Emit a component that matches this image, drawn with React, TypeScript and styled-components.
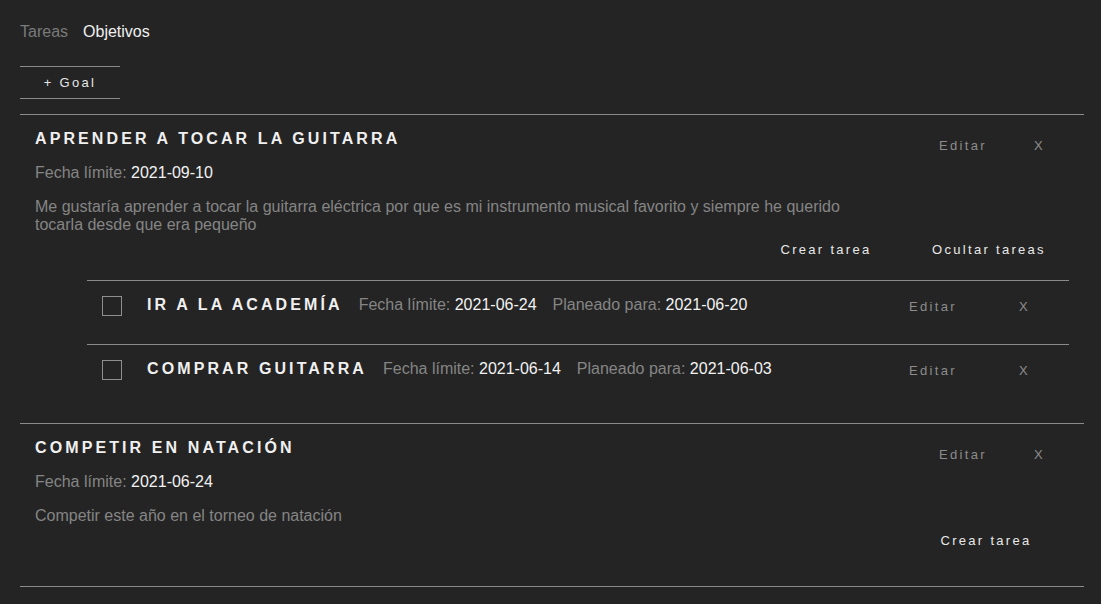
import React from "react";
import styled, { createGlobalStyle } from "styled-components";

const Global = createGlobalStyle`
  html, body { margin: 0; padding: 0; background: #242424; }
  body { font-family: "Liberation Sans", Arial, sans-serif; }
  * { box-sizing: border-box; }
`;

const Page = styled.div`
  min-height: 604px;
  background: #242424;
  padding: 23px 17px 0 20px;
  color: #eee;
`;

const Tabs = styled.nav`
  display: flex;
  gap: 15px;
  height: 18px;
`;

const Tab = styled.span<{ $active?: boolean }>`
  font-size: 16px;
  line-height: 18px;
  color: ${(p) => (p.$active ? "#f0f0f0" : "#7a7a7a")};
`;

const AddGoal = styled.button`
  display: block;
  margin-top: 25px;
  width: 100px;
  height: 33px;
  background: none;
  border: none;
  border-top: 1px solid #8a8a8a;
  border-bottom: 1px solid #8a8a8a;
  color: #e6e6e6;
  font-family: inherit;
  font-size: 13px;
  letter-spacing: 2.3px;
  padding: 0;
  text-align: center;
`;

const GoalList = styled.div`
  margin-top: 15px;
  border-bottom: 1px solid #8a8a8a;
`;

const GoalCard = styled.section`
  border-top: 1px solid #8a8a8a;
  padding: 14px 15px 15px 15px;
`;

const GoalHeader = styled.div`
  display: flex;
  align-items: flex-start;
  justify-content: space-between;
`;

const GoalTitle = styled.h2`
  margin: 0;
  font-size: 16px;
  line-height: 20px;
  font-weight: bold;
  letter-spacing: 3.1px;
  color: #f0f0f0;
`;

const Controls = styled.div<{ $gap?: number }>`
  display: flex;
  gap: ${(p) => p.$gap ?? 0}px;
  margin-top: 7px;
  margin-bottom: -7px;
  margin-right: -1px;
`;

const GhostButton = styled.button<{ $w: number }>`
  width: ${(p) => p.$w}px;
  height: 20px;
  padding: 0;
  background: none;
  border: none;
  color: #8c8c8c;
  font-family: inherit;
  font-size: 13px;
  line-height: 20px;
  letter-spacing: 2.3px;
  text-align: center;
`;

const Meta = styled.p`
  margin: 15px 0 0 0;
  font-size: 16px;
  line-height: 18px;
`;

const Label = styled.span`
  color: #858585;
`;

const Value = styled.span`
  color: #f2f2f2;
`;

const Description = styled.p`
  margin: 16px 0 0 0;
  max-width: 80%;
  font-size: 16px;
  line-height: 18px;
  color: #858585;
`;

const Actions = styled.div`
  display: flex;
  justify-content: flex-end;
  margin: 1px 0 15px 0;
`;

const ActionButton = styled.button<{ $w: number }>`
  width: ${(p) => p.$w}px;
  height: 30px;
  padding: 0;
  background: none;
  border: none;
  color: #e8e8e8;
  font-family: inherit;
  font-size: 13px;
  line-height: 30px;
  letter-spacing: 2.3px;
  text-align: center;
`;

const TaskList = styled.div`
  margin-left: 52px;
`;

const TaskRow = styled.div`
  display: flex;
  align-items: flex-start;
  height: 64px;
  border-top: 1px solid #8a8a8a;
  padding: 15px 15px 0 15px;
`;

const Checkbox = styled.span`
  flex: none;
  width: 20px;
  height: 20px;
  border: 1px solid #8e8e8e;
`;

const TaskTitle = styled.span`
  margin-left: 25px;
  font-size: 16px;
  line-height: 18px;
  font-weight: bold;
  letter-spacing: 3.1px;
  color: #f0f0f0;
`;

const TaskMeta = styled.span`
  margin-left: 16px;
  font-size: 16px;
  line-height: 18px;
  white-space: nowrap;
`;

const Spacer = styled.div`
  flex: 1;
`;

const TaskControls = styled.div`
  display: flex;
  gap: 15px;
  margin-top: 1px;
  margin-right: -1px;
`;

type Task = { title: string; deadline: string; planned: string };
type Goal = {
  title: string;
  deadline: string;
  description: string;
  tasks: Task[];
};

const goals: Goal[] = [
  {
    title: "APRENDER A TOCAR LA GUITARRA",
    deadline: "2021-09-10",
    description:
      "Me gustaría aprender a tocar la guitarra eléctrica por que es mi instrumento musical favorito y siempre he querido tocarla desde que era pequeño",
    tasks: [
      { title: "IR A LA ACADEMÍA", deadline: "2021-06-24", planned: "2021-06-20" },
      { title: "COMPRAR GUITARRA", deadline: "2021-06-14", planned: "2021-06-03" },
    ],
  },
  {
    title: "COMPETIR EN NATACIÓN",
    deadline: "2021-06-24",
    description: "Competir este año en el torneo de natación",
    tasks: [],
  },
];

export default function App() {
  return (
    <>
      <Global />
      <Page>
        <Tabs>
          <Tab>Tareas</Tab>
          <Tab $active>Objetivos</Tab>
        </Tabs>
        <AddGoal>+ Goal</AddGoal>
        <GoalList>
          {goals.map((g) => (
            <GoalCard key={g.title}>
              <GoalHeader>
                <GoalTitle>{g.title}</GoalTitle>
                <Controls>
                  <GhostButton $w={92}>Editar</GhostButton>
                  <GhostButton $w={61}>X</GhostButton>
                </Controls>
              </GoalHeader>
              <Meta>
                <Label>Fecha límite: </Label>
                <Value>{g.deadline}</Value>
              </Meta>
              <Description>{g.description}</Description>
              <Actions>
                <ActionButton $w={166}>Crear tarea</ActionButton>
                {g.tasks.length > 0 && (
                  <ActionButton $w={160}>Ocultar tareas</ActionButton>
                )}
              </Actions>
              {g.tasks.length > 0 && (
                <TaskList>
                  {g.tasks.map((t) => (
                    <TaskRow key={t.title}>
                      <Checkbox />
                      <TaskTitle>{t.title}</TaskTitle>
                      <TaskMeta>
                        <Label>Fecha límite: </Label>
                        <Value>{t.deadline}</Value>
                      </TaskMeta>
                      <TaskMeta>
                        <Label>Planeado para: </Label>
                        <Value>{t.planned}</Value>
                      </TaskMeta>
                      <Spacer />
                      <TaskControls>
                        <GhostButton $w={92}>Editar</GhostButton>
                        <GhostButton $w={61}>X</GhostButton>
                      </TaskControls>
                    </TaskRow>
                  ))}
                </TaskList>
              )}
            </GoalCard>
          ))}
        </GoalList>
      </Page>
    </>
  );
}
